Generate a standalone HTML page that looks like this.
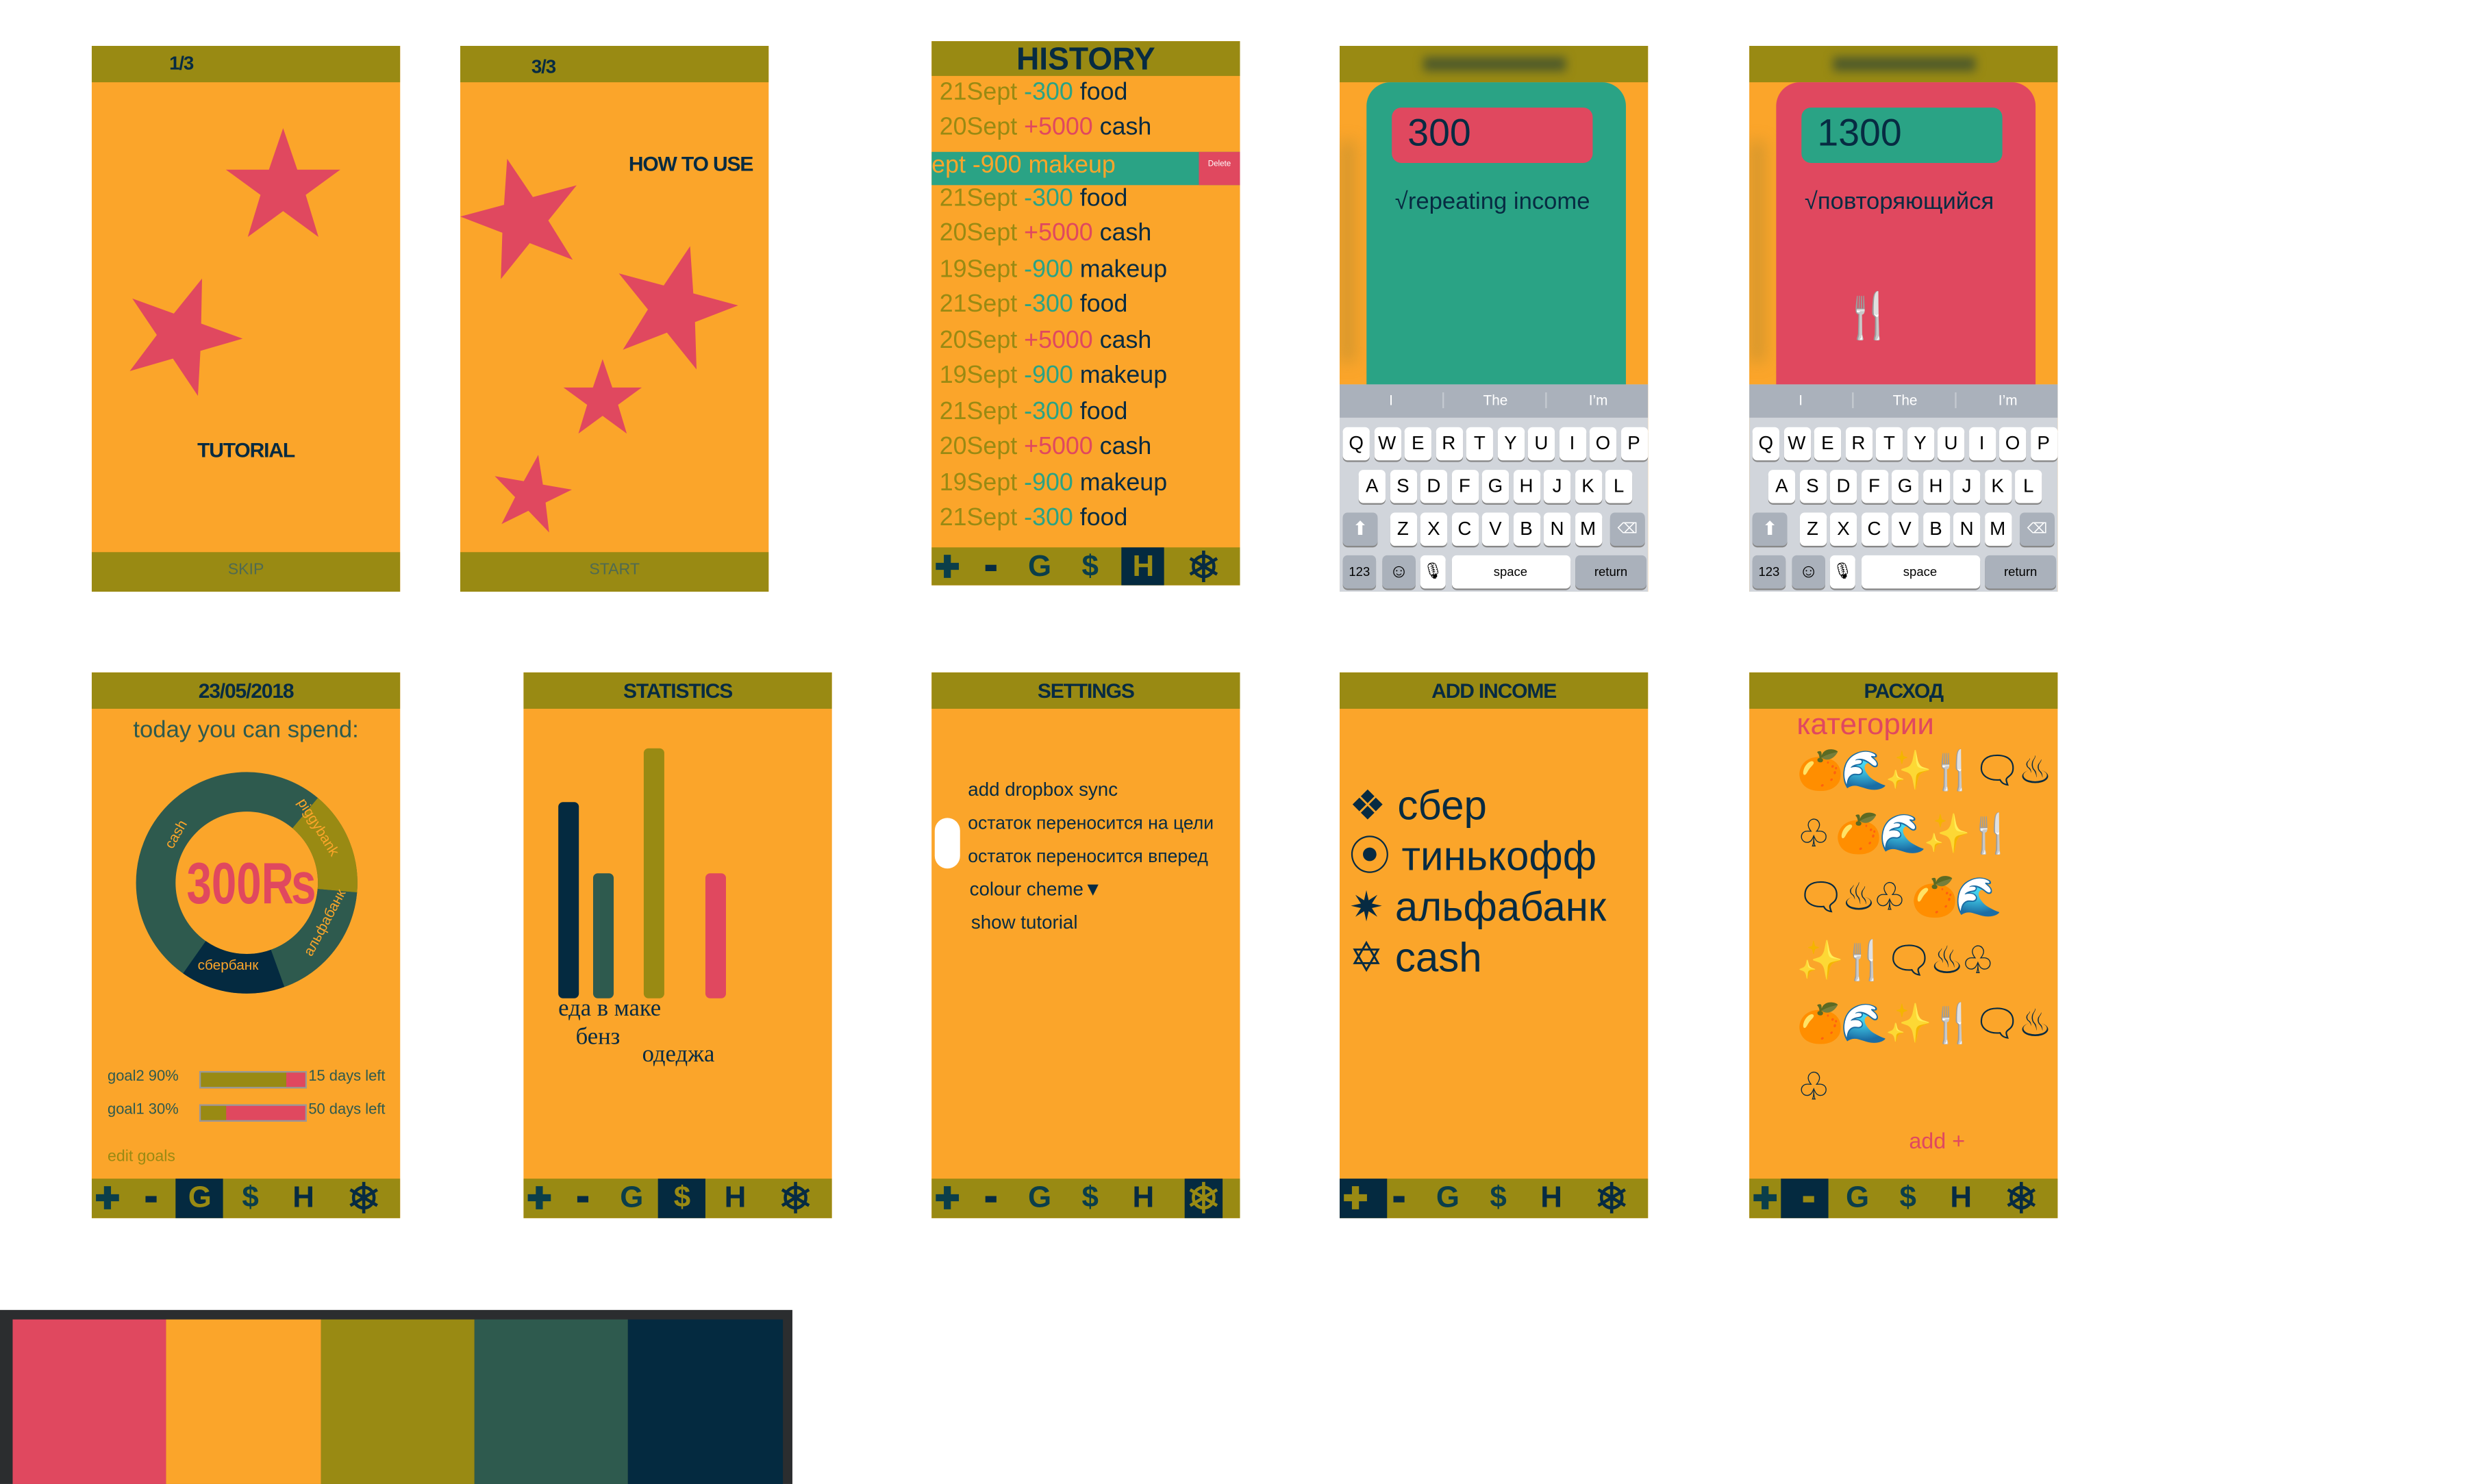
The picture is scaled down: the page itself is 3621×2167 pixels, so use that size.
<!DOCTYPE html>
<html><head><meta charset="utf-8">
<style>
html,body{margin:0;padding:0;background:#fff;}
body{width:3621px;height:2167px;overflow:hidden;position:relative;}
#w{position:absolute;left:0;top:0;width:1568px;height:938px;transform:scale(2.3093,2.3102);transform-origin:0 0;font-family:"Liberation Sans","DejaVu Sans",sans-serif;}
.p{position:absolute;width:195px;height:345px;background:#fba52a;overflow:hidden;}
.h{position:absolute;left:0;top:0;width:195px;height:23px;background:#998a13;color:#072b42;font-weight:bold;font-size:13px;text-align:center;line-height:23px;letter-spacing:-0.5px;transform-origin:center;}
.f{position:absolute;left:0;bottom:0;width:195px;height:25px;background:#998a13;}
.f .t{position:absolute;width:100%;text-align:center;top:6px;font-size:10px;color:#4f6a52;}
.nav i{position:absolute;top:2px;font-style:normal;font-weight:bold;color:#0b3e4a;font-size:19px;font-family:"Liberation Sans",sans-serif;}
.nav .a{position:absolute;top:0;height:25px;background:#042a40;}
.nav .m{position:absolute;top:11px;width:7px;height:4px;background:#072b42;}
.nav svg{position:absolute;top:2px;}
.abs{position:absolute;}
.hist .row{position:absolute;left:5px;font-size:15.5px;white-space:nowrap;font-family:"Liberation Sans Narrow","Liberation Sans",sans-serif;}
.o{color:#998a13}.tl{color:#2aa385}.r{color:#e0485f}.n{color:#072b42}
.kb{position:absolute;left:0;top:214px;width:195px;height:131px;background:#d1d5db;}
.sug{position:absolute;left:0;top:0;width:195px;height:21px;background:#aab1bb;color:#fff;font-size:9px;}
.sug span{position:absolute;top:5px;width:65px;text-align:center;}
.k{position:absolute;width:17px;height:21px;background:#fff;border-radius:3px;box-shadow:0 1px 0 #888;font-size:12px;text-align:center;line-height:21px;color:#000;}
.kg{background:#aab1bb;}
</style></head><body><div id="w">

<!-- Panel 1 -->
<div class="p" style="left:58px;top:29px;">
 <div class="h" style="text-align:left;padding-left:49px;width:146px;font-size:12px;">1/3</div>
 <svg class="abs" style="left:0;top:0" width="195" height="345">
  <g fill="#e0485f">
   <polygon transform="translate(83,52) scale(0.76)" points="50,0 61.8,34.5 97.6,34.5 68.8,55.5 79.4,90.5 50,69 20.6,90.5 31.2,55.5 2.4,34.5 38.2,34.5"/>
   <polygon transform="translate(17,145) rotate(20 40 40) scale(0.78)" points="50,0 61.8,34.5 97.6,34.5 68.8,55.5 79.4,90.5 50,69 20.6,90.5 31.2,55.5 2.4,34.5 38.2,34.5"/>
  </g>
 </svg>
 <div class="abs n" style="left:0;width:195px;text-align:center;top:248px;font-weight:bold;font-size:13px;letter-spacing:-0.5px;">TUTORIAL</div>
 <div class="f"><div class="t">SKIP</div></div>
</div>

<!-- Panel 2 -->
<div class="p" style="left:291px;top:29px;">
 <div class="h" style="text-align:left;padding-left:45px;width:150px;font-size:12px;line-height:26px;">3/3</div>
 <svg class="abs" style="left:0;top:0" width="195" height="345">
  <g fill="#e0485f">
   <polygon transform="translate(0,70) rotate(-15 40 40) scale(0.8)" points="50,0 61.8,34.5 97.6,34.5 68.8,55.5 79.4,90.5 50,69 20.6,90.5 31.2,55.5 2.4,34.5 38.2,34.5"/>
   <polygon transform="translate(94,125) rotate(15 40 40) scale(0.82)" points="50,0 61.8,34.5 97.6,34.5 68.8,55.5 79.4,90.5 50,69 20.6,90.5 31.2,55.5 2.4,34.5 38.2,34.5"/>
   <polygon transform="translate(64,198) scale(0.52)" points="50,0 61.8,34.5 97.6,34.5 68.8,55.5 79.4,90.5 50,69 20.6,90.5 31.2,55.5 2.4,34.5 38.2,34.5"/>
   <polygon transform="translate(19,258) rotate(10 25 25) scale(0.52)" points="50,0 61.8,34.5 97.6,34.5 68.8,55.5 79.4,90.5 50,69 20.6,90.5 31.2,55.5 2.4,34.5 38.2,34.5"/>
  </g>
 </svg>
 <div class="abs n" style="right:10px;top:67px;font-weight:bold;font-size:13px;letter-spacing:-0.5px;">HOW TO USE</div>
 <div class="f"><div class="t">START</div></div>
</div>

<!-- History -->
<div class="p hist" style="left:589px;top:26px;height:344px;">
 <div class="h" style="height:22px;font-size:20px;line-height:24px;font-family:'Liberation Sans Narrow','Liberation Sans',sans-serif;letter-spacing:0;">HISTORY</div>
 <div class="row" style="top:24px"><span class="o">21Sept</span> <span class="tl">-300</span> <span class="n">food</span></div>
 <div class="row" style="top:46px"><span class="o">20Sept</span> <span class="r">+5000</span> <span class="n">cash</span></div>
 <div class="abs" style="left:0;top:70px;width:195px;height:21px;background:#2aa385;"></div>
 <div class="row" style="left:0;top:70px;color:#fba52a;">ept -900 makeup</div>
 <div class="abs" style="left:169px;top:70px;width:26px;height:21px;background:#e0485f;color:#fff;font-size:5px;line-height:16px;text-align:center;">Delete</div>
 <div class="row" style="top:91px"><span class="o">21Sept</span> <span class="tl">-300</span> <span class="n">food</span></div>
 <div class="row" style="top:113px"><span class="o">20Sept</span> <span class="r">+5000</span> <span class="n">cash</span></div>
 <div class="row" style="top:136px"><span class="o">19Sept</span> <span class="tl">-900</span> <span class="n">makeup</span></div>
 <div class="row" style="top:158px"><span class="o">21Sept</span> <span class="tl">-300</span> <span class="n">food</span></div>
 <div class="row" style="top:181px"><span class="o">20Sept</span> <span class="r">+5000</span> <span class="n">cash</span></div>
 <div class="row" style="top:203px"><span class="o">19Sept</span> <span class="tl">-900</span> <span class="n">makeup</span></div>
 <div class="row" style="top:226px"><span class="o">21Sept</span> <span class="tl">-300</span> <span class="n">food</span></div>
 <div class="row" style="top:248px"><span class="o">20Sept</span> <span class="r">+5000</span> <span class="n">cash</span></div>
 <div class="row" style="top:271px"><span class="o">19Sept</span> <span class="tl">-900</span> <span class="n">makeup</span></div>
 <div class="row" style="top:293px"><span class="o">21Sept</span> <span class="tl">-300</span> <span class="n">food</span></div>
 <div class="f nav" style="height:24px;"><span class="a" style="left:120px;width:27px;height:24px;"></span><i style="left:2px">✚</i><b class="m" style="left:34px"></b><i style="left:61px">G</i><i style="left:95px">$</i><i style="left:127px;color:#998a13">H</i><svg style="left:162px" width="20" height="20" viewBox="0 0 20 20"><g stroke="#072b42" stroke-width="2" fill="none"><circle cx="10" cy="10" r="6.5"/><line x1="10" y1="0" x2="10" y2="20"/><line x1="1.5" y1="5" x2="18.5" y2="15"/><line x1="1.5" y1="15" x2="18.5" y2="5"/></g></svg></div>
</div>

<!-- Keyboard panel A -->
<div class="p" style="left:847px;top:29px;">
 <div class="h"><span style="display:inline-block;width:90px;height:9px;margin-top:7px;background:#4f5a2a;filter:blur(3px);"></span></div>
 <div class="abs" style="left:0;top:60px;width:10px;height:140px;background:#b08a30;filter:blur(5px);opacity:.5;"></div>
 <div class="abs" style="left:17px;top:23px;width:164px;height:200px;background:#2aa385;border-radius:15px 15px 0 0;"></div>
 <div class="abs" style="left:33px;top:39px;width:127px;height:35px;background:#e0485f;border-radius:6px;"></div>
 <div class="abs n" style="left:43px;top:42px;font-size:24px;">300</div>
 <div class="abs n" style="left:35px;top:90px;font-size:15px;">√repeating income</div>
 <div class="kb">
  <div class="sug"><span style="left:0">I</span><span style="left:65px;border-left:1px solid #c5cad1;">The</span><span style="left:130px;border-left:1px solid #c5cad1;">I’m</span></div>
  <div class="k" style="left:2px;top:27px">Q</div><div class="k" style="left:21.5px;top:27px">W</div><div class="k" style="left:41px;top:27px">E</div><div class="k" style="left:60.5px;top:27px">R</div><div class="k" style="left:80px;top:27px">T</div><div class="k" style="left:99.5px;top:27px">Y</div><div class="k" style="left:119px;top:27px">U</div><div class="k" style="left:138.5px;top:27px">I</div><div class="k" style="left:158px;top:27px">O</div><div class="k" style="left:177.5px;top:27px">P</div>
  <div class="k" style="left:12px;top:54px">A</div><div class="k" style="left:31.5px;top:54px">S</div><div class="k" style="left:51px;top:54px">D</div><div class="k" style="left:70.5px;top:54px">F</div><div class="k" style="left:90px;top:54px">G</div><div class="k" style="left:109.5px;top:54px">H</div><div class="k" style="left:129px;top:54px">J</div><div class="k" style="left:148.5px;top:54px">K</div><div class="k" style="left:168px;top:54px">L</div>
  <div class="k kg" style="left:2px;top:81px;width:22px;color:#fff">⬆</div><div class="k" style="left:31.5px;top:81px">Z</div><div class="k" style="left:51px;top:81px">X</div><div class="k" style="left:70.5px;top:81px">C</div><div class="k" style="left:90px;top:81px">V</div><div class="k" style="left:109.5px;top:81px">B</div><div class="k" style="left:129px;top:81px">N</div><div class="k" style="left:148.5px;top:81px">M</div><div class="k kg" style="left:171px;top:81px;width:22px;color:#fff;font-size:9px">⌫</div>
  <div class="k kg" style="left:2px;top:108px;width:21px;font-size:8px">123</div><div class="k kg" style="left:27px;top:108px;width:21px">☺</div><div class="k" style="left:51px;top:108px;width:16px;font-size:10px">🎙</div><div class="k" style="left:70.5px;top:108px;width:75px;font-size:8px">space</div><div class="k kg" style="left:149px;top:108px;width:45px;font-size:8px">return</div>
 </div>
</div>

<!-- Keyboard panel B -->
<div class="p" style="left:1106px;top:29px;">
 <div class="h"><span style="display:inline-block;width:90px;height:9px;margin-top:7px;background:#4f5a2a;filter:blur(3px);"></span></div>
 <div class="abs" style="left:0;top:60px;width:10px;height:140px;background:#b08a30;filter:blur(5px);opacity:.5;"></div>
 <div class="abs" style="left:17px;top:23px;width:164px;height:200px;background:#e0485f;border-radius:15px 15px 0 0;"></div>
 <div class="abs" style="left:33px;top:39px;width:127px;height:35px;background:#2aa385;border-radius:6px;"></div>
 <div class="abs n" style="left:43px;top:42px;font-size:24px;">1300</div>
 <div class="abs n" style="left:35px;top:90px;font-size:15px;">√повторяющийся</div>
 <div class="abs" style="left:58px;top:154px;font-size:28px;color:#ddd;">🍴</div>
 <div class="kb">
  <div class="sug"><span style="left:0">I</span><span style="left:65px;border-left:1px solid #c5cad1;">The</span><span style="left:130px;border-left:1px solid #c5cad1;">I’m</span></div>
  <div class="k" style="left:2px;top:27px">Q</div><div class="k" style="left:21.5px;top:27px">W</div><div class="k" style="left:41px;top:27px">E</div><div class="k" style="left:60.5px;top:27px">R</div><div class="k" style="left:80px;top:27px">T</div><div class="k" style="left:99.5px;top:27px">Y</div><div class="k" style="left:119px;top:27px">U</div><div class="k" style="left:138.5px;top:27px">I</div><div class="k" style="left:158px;top:27px">O</div><div class="k" style="left:177.5px;top:27px">P</div>
  <div class="k" style="left:12px;top:54px">A</div><div class="k" style="left:31.5px;top:54px">S</div><div class="k" style="left:51px;top:54px">D</div><div class="k" style="left:70.5px;top:54px">F</div><div class="k" style="left:90px;top:54px">G</div><div class="k" style="left:109.5px;top:54px">H</div><div class="k" style="left:129px;top:54px">J</div><div class="k" style="left:148.5px;top:54px">K</div><div class="k" style="left:168px;top:54px">L</div>
  <div class="k kg" style="left:2px;top:81px;width:22px;color:#fff">⬆</div><div class="k" style="left:31.5px;top:81px">Z</div><div class="k" style="left:51px;top:81px">X</div><div class="k" style="left:70.5px;top:81px">C</div><div class="k" style="left:90px;top:81px">V</div><div class="k" style="left:109.5px;top:81px">B</div><div class="k" style="left:129px;top:81px">N</div><div class="k" style="left:148.5px;top:81px">M</div><div class="k kg" style="left:171px;top:81px;width:22px;color:#fff;font-size:9px">⌫</div>
  <div class="k kg" style="left:2px;top:108px;width:21px;font-size:8px">123</div><div class="k kg" style="left:27px;top:108px;width:21px">☺</div><div class="k" style="left:51px;top:108px;width:16px;font-size:10px">🎙</div><div class="k" style="left:70.5px;top:108px;width:75px;font-size:8px">space</div><div class="k kg" style="left:149px;top:108px;width:45px;font-size:8px">return</div>
 </div>
</div>

<!-- Home -->
<div class="p" style="left:58px;top:425px;">
 <div class="h">23/05/2018</div>
 <div class="abs" style="left:0;width:195px;text-align:center;top:28px;font-size:15px;color:#2e5a4e;">today you can spend:</div>
 <svg class="abs" style="left:27px;top:62px" width="142" height="142" viewBox="0 0 142 142">
  <g transform="rotate(-90 71 71)" fill="none" stroke-width="25">
   <circle cx="71" cy="71" r="57.5" stroke="#2e5a4e"/>
   <circle cx="71" cy="71" r="57.5" stroke="#998a13" stroke-dasharray="55.2 400" stroke-dashoffset="-40.1"/>
   <circle cx="71" cy="71" r="57.5" stroke="#2e5a4e" stroke-dasharray="65.2 400" stroke-dashoffset="-95.3"/>
   <circle cx="71" cy="71" r="57.5" stroke="#042a40" stroke-dasharray="55.2 400" stroke-dashoffset="-160.6"/>
  </g>
  <text x="24" y="50" fill="#fba52a" font-size="9" transform="rotate(-60 24 50)">cash</text>
  <text x="103" y="20" fill="#fba52a" font-size="9" transform="rotate(58 103 20)">piggybank</text>
  <text x="112" y="118" fill="#fba52a" font-size="9" transform="rotate(-62 112 118)">альфабанк</text>
  <text x="40" y="126" fill="#fba52a" font-size="9">сбербанк</text>
  <text x="33" y="84" fill="#e0485f" font-size="37" font-weight="bold" textLength="82" lengthAdjust="spacingAndGlyphs" font-family="Liberation Sans Narrow,Liberation Sans,sans-serif">300₨</text>
 </svg>
 <div class="abs" style="left:10px;top:250px;font-size:9.5px;color:#2e5a4e;">goal2 90%</div>
 <div class="abs" style="left:68px;top:252px;width:66px;height:9px;background:#998a13;border:1px solid #999;"></div>
 <div class="abs" style="left:123px;top:253px;width:12px;height:9px;background:#e0485f;"></div>
 <div class="abs" style="left:137px;top:250px;font-size:9.5px;color:#2e5a4e;">15 days left</div>
 <div class="abs" style="left:10px;top:271px;font-size:9.5px;color:#2e5a4e;">goal1 30%</div>
 <div class="abs" style="left:68px;top:273px;width:66px;height:9px;background:#e0485f;border:1px solid #999;"></div>
 <div class="abs" style="left:69px;top:274px;width:16px;height:9px;background:#998a13;"></div>
 <div class="abs" style="left:137px;top:271px;font-size:9.5px;color:#2e5a4e;">50 days left</div>
 <div class="abs o" style="left:10px;top:301px;font-size:10px;">edit goals</div>
 <div class="f nav"><span class="a" style="left:53px;width:30px;"></span><i style="left:2px">✚</i><b class="m" style="left:34px"></b><i style="left:61px;color:#998a13">G</i><i style="left:95px">$</i><i style="left:127px;color:#072b42">H</i><svg style="left:162px" width="20" height="20" viewBox="0 0 20 20"><g stroke="#072b42" stroke-width="2" fill="none"><circle cx="10" cy="10" r="6.5"/><line x1="10" y1="0" x2="10" y2="20"/><line x1="1.5" y1="5" x2="18.5" y2="15"/><line x1="1.5" y1="15" x2="18.5" y2="5"/></g></svg></div>
</div>

<!-- Statistics -->
<div class="p" style="left:331px;top:425px;">
 <div class="h">STATISTICS</div>
 <div class="abs" style="left:22px;top:82px;width:13px;height:124px;background:#042a40;border-radius:3px;"></div>
 <div class="abs" style="left:44px;top:127px;width:13px;height:79px;background:#2e5a4e;border-radius:3px;"></div>
 <div class="abs" style="left:76px;top:48px;width:13px;height:158px;background:#998a13;border-radius:3px;"></div>
 <div class="abs" style="left:115px;top:127px;width:13px;height:79px;background:#e0485f;border-radius:3px;"></div>
 <div class="abs n" style="left:22px;top:205px;font-size:15px;font-family:'Liberation Serif',serif;">еда в маке</div>
 <div class="abs n" style="left:33px;top:223px;font-size:15px;font-family:'Liberation Serif',serif;">бенз</div>
 <div class="abs n" style="left:75px;top:234px;font-size:15px;font-family:'Liberation Serif',serif;">одеджа</div>
 <div class="f nav"><span class="a" style="left:85px;width:30px;"></span><i style="left:2px">✚</i><b class="m" style="left:34px"></b><i style="left:61px">G</i><i style="left:95px;color:#998a13">$</i><i style="left:127px;color:#072b42">H</i><svg style="left:162px" width="20" height="20" viewBox="0 0 20 20"><g stroke="#072b42" stroke-width="2" fill="none"><circle cx="10" cy="10" r="6.5"/><line x1="10" y1="0" x2="10" y2="20"/><line x1="1.5" y1="5" x2="18.5" y2="15"/><line x1="1.5" y1="15" x2="18.5" y2="5"/></g></svg></div>
</div>

<!-- Settings -->
<div class="p" style="left:589px;top:425px;">
 <div class="h">SETTINGS</div>
 <div class="abs n" style="left:23px;top:67px;font-size:12px;">add dropbox sync</div>
 <div class="abs" style="left:2px;top:92px;width:16px;height:32px;background:#fff;border-radius:8px;"></div>
 <div class="abs n" style="left:23px;top:90px;font-size:11.5px;white-space:nowrap;">остаток переносится на цели</div>
 <div class="abs n" style="left:23px;top:111px;font-size:11.5px;white-space:nowrap;">остаток переносится вперед</div>
 <div class="abs n" style="left:24px;top:130px;font-size:12px;">colour cheme▼</div>
 <div class="abs n" style="left:25px;top:151px;font-size:12px;">show tutorial</div>
 <div class="f nav"><span class="a" style="left:160px;width:24px;"></span><i style="left:2px">✚</i><b class="m" style="left:34px"></b><i style="left:61px">G</i><i style="left:95px">$</i><i style="left:127px;color:#072b42">H</i><svg style="left:162px" width="20" height="20" viewBox="0 0 20 20"><g stroke="#998a13" stroke-width="2" fill="none"><circle cx="10" cy="10" r="6.5"/><line x1="10" y1="0" x2="10" y2="20"/><line x1="1.5" y1="5" x2="18.5" y2="15"/><line x1="1.5" y1="15" x2="18.5" y2="5"/></g></svg></div>
</div>

<!-- Add income -->
<div class="p" style="left:847px;top:425px;">
 <div class="h">ADD INCOME</div>
 <div class="abs n" style="left:6px;top:68px;font-size:26px;line-height:32px;white-space:nowrap;">❖ сбер<br>⦿ тинькофф<br>✷ альфабанк<br>✡ cash</div>
 <div class="f nav"><span class="a" style="left:0;width:30px;"></span><i style="left:2px;color:#998a13">✚</i><b class="m" style="left:34px"></b><i style="left:61px">G</i><i style="left:95px">$</i><i style="left:127px;color:#072b42">H</i><svg style="left:162px" width="20" height="20" viewBox="0 0 20 20"><g stroke="#072b42" stroke-width="2" fill="none"><circle cx="10" cy="10" r="6.5"/><line x1="10" y1="0" x2="10" y2="20"/><line x1="1.5" y1="5" x2="18.5" y2="15"/><line x1="1.5" y1="15" x2="18.5" y2="5"/></g></svg></div>
</div>

<!-- Расход -->
<div class="p" style="left:1106px;top:425px;">
 <div class="h">РАСХОД</div>
 <div class="abs r" style="left:30px;top:23px;font-size:19px;">категории</div>
 <div class="abs n" style="left:30px;top:43px;font-size:24px;line-height:40px;white-space:nowrap;letter-spacing:-2px;">🍊🌊✨🍴🗨♨<br>♧ 🍊🌊✨🍴<br>🗨♨♧ 🍊🌊<br>✨🍴🗨♨♧<br>🍊🌊✨🍴🗨♨<br>♧</div>
 <div class="abs r" style="left:101px;top:288px;font-size:14px;">add +</div>
 <div class="f nav"><span class="a" style="left:20px;width:30px;"></span><i style="left:2px">✚</i><b class="m" style="left:34px;background:#998a13"></b><i style="left:61px">G</i><i style="left:95px">$</i><i style="left:127px;color:#072b42">H</i><svg style="left:162px" width="20" height="20" viewBox="0 0 20 20"><g stroke="#072b42" stroke-width="2" fill="none"><circle cx="10" cy="10" r="6.5"/><line x1="10" y1="0" x2="10" y2="20"/><line x1="1.5" y1="5" x2="18.5" y2="15"/><line x1="1.5" y1="15" x2="18.5" y2="5"/></g></svg></div>
</div>

<!-- Palette -->
<div class="abs" style="left:0;top:828px;width:501px;height:110px;background:#2b2d2f;"></div>
<div class="abs" style="left:8px;top:834px;width:97px;height:104px;background:#e0485f;"></div>
<div class="abs" style="left:105px;top:834px;width:98px;height:104px;background:#fba52a;"></div>
<div class="abs" style="left:203px;top:834px;width:97px;height:104px;background:#998a13;"></div>
<div class="abs" style="left:300px;top:834px;width:97px;height:104px;background:#2e5a4e;"></div>
<div class="abs" style="left:397px;top:834px;width:98px;height:104px;background:#042a40;"></div>

</div></body></html>
